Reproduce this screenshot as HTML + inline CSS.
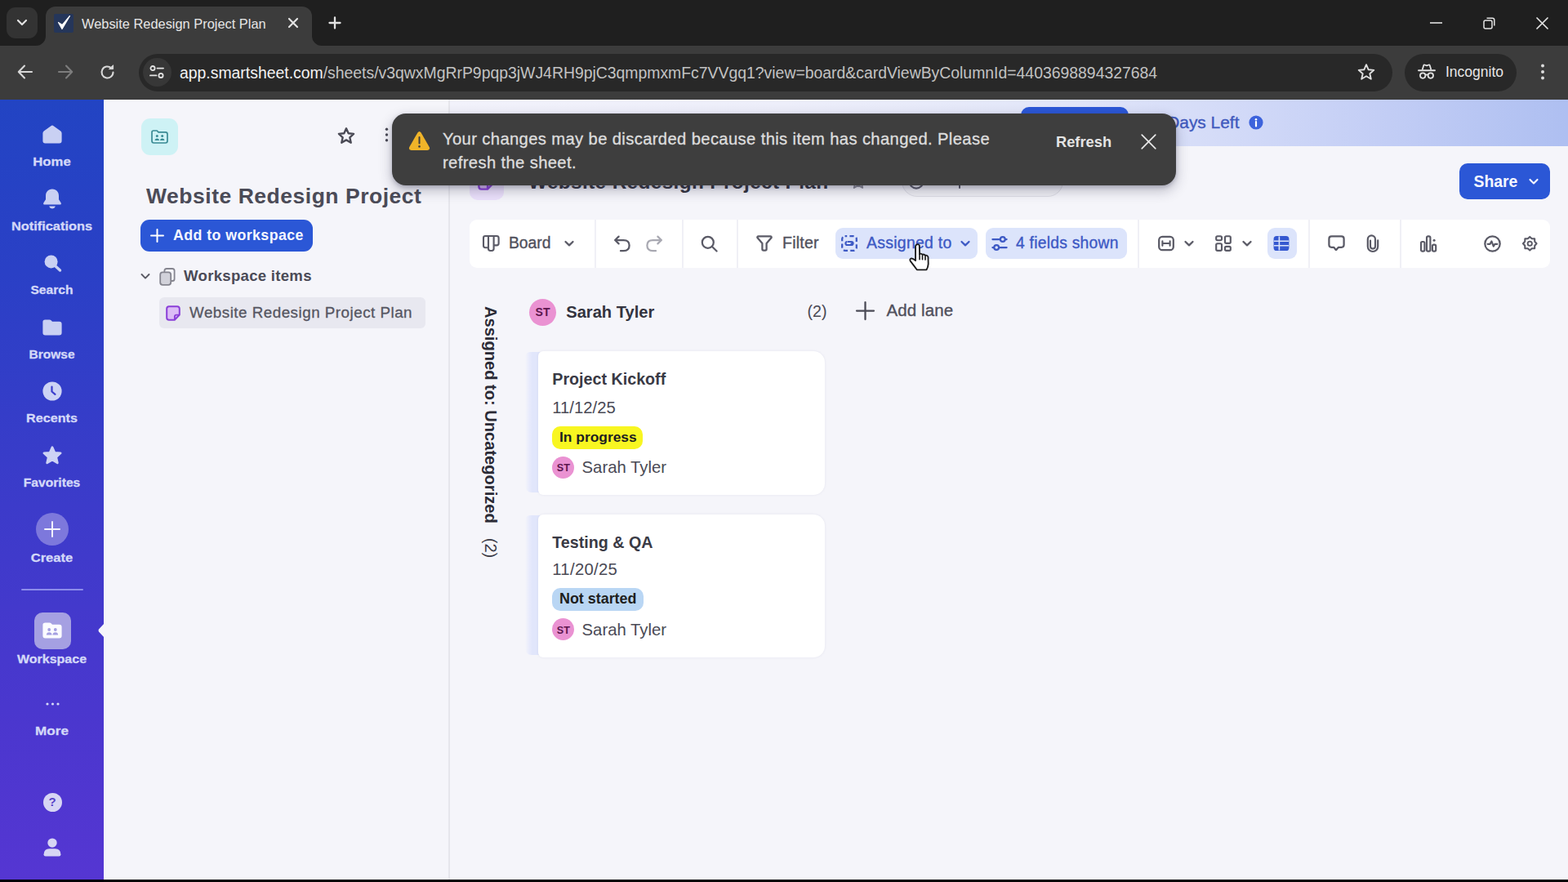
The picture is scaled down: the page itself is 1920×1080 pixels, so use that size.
<!DOCTYPE html>
<html lang="en">
<head>
<meta charset="utf-8">
<title>Website Redesign Project Plan</title>
<style>
*{box-sizing:border-box;margin:0;padding:0}
html,body{width:1920px;height:1080px;overflow:hidden;background:#f5f5fa}
body{font-family:"Liberation Sans",sans-serif;position:relative;color:#3a3a44}
.a{position:absolute}
.t{position:absolute;white-space:nowrap;line-height:1;transform-origin:0 50%}
svg{position:absolute;overflow:visible}
/* browser chrome */
#tabstrip{left:0;top:0;width:1920px;height:56px;background:#1f1f1f}
#toolbar{left:0;top:56px;width:1920px;height:66px;background:#3c3c3c}
#tab{left:56px;top:8px;width:326px;height:48px;background:#3c3c3c;border-radius:12px 12px 0 0}
#tabsearch{left:8px;top:9px;width:38px;height:38px;background:#333333;border-radius:11px}
#urlbar{left:170px;top:65.5px;width:1535px;height:46.5px;background:#282828;border-radius:23px}
#siteinfo{left:175px;top:71px;width:35px;height:35px;background:#373737;border-radius:50%}
#incog{left:1720px;top:65.5px;width:137px;height:46.5px;background:#282828;border-radius:23px}
/* app */
#sidebar{left:0;top:122px;width:127px;height:956px;background:linear-gradient(180deg,#2244c3 0%,#2a40c6 22%,#3c3bca 52%,#4a37ce 78%,#5536d2 100%)}
#leftpanel{left:127px;top:122px;width:423px;height:956px;background:#f5f5fa}
#vline{left:549px;top:122px;width:2px;height:956px;background:#e6e6ec}
#main{left:551px;top:122px;width:1369px;height:956px;background:#f5f5fa}
#banner{left:551px;top:122px;width:1369px;height:56.5px;background:linear-gradient(90deg,#f2f2fb 0%,#edeefa 30%,#e3e7f9 52%,#d5dcf8 68%,#c2cdf5 84%,#aebff1 100%)}
#bottom{left:0;top:1077px;width:1920px;height:3px;background:#000}
.sl{position:absolute;left:0;width:127px;text-align:center;font-weight:bold;font-size:15px;color:#d3d8f8;line-height:1;white-space:nowrap}
</style>
</head>
<body>
<!-- BROWSER CHROME -->
<div class="a" id="tabstrip"></div>
<div class="a" id="toolbar"></div>
<div class="a" id="tabsearch"></div>
<div class="a" id="tab"></div>
<div class="a" id="urlbar"></div>
<div class="a" id="siteinfo"></div>
<div class="a" id="incog"></div>
<!-- APP -->
<div class="a" id="sidebar"></div>
<div class="a" id="leftpanel"></div>
<div class="a" id="main"></div>
<div class="a" id="banner"></div>
<div class="a" id="vline"></div>
<div class="a" id="bottom"></div>
<!-- tab curves -->
<svg class="a" style="left:44px;top:44px" width="12" height="12" viewBox="0 0 12 12"><path d="M12 0 V12 H0 A12 12 0 0 0 12 0Z" fill="#3c3c3c"/></svg>
<svg class="a" style="left:382px;top:44px" width="12" height="12" viewBox="0 0 12 12"><path d="M0 0 V12 H12 A12 12 0 0 1 0 0Z" fill="#3c3c3c"/></svg>
<!-- tab search chevron -->
<svg style="left:20px;top:22px" width="14" height="12" viewBox="0 0 14 12"><path d="M2 3 L7 8 L12 3" fill="none" stroke="#e3e3e3" stroke-width="2.2" stroke-linecap="round" stroke-linejoin="round"/></svg>
<!-- favicon -->
<div class="a" style="left:65.5px;top:16.5px;width:24px;height:23px;background:#25365a;border-radius:2px"></div>
<svg style="left:66px;top:16px" width="24" height="24" viewBox="0 0 24 24"><path d="M5.5 11.5 L10 19.5 L19.5 3.5 L10.2 14.6 Z" fill="#fff" stroke="#fff" stroke-width="1.2" stroke-linejoin="round"/></svg>
<div class="t" id="tabtitle" style="left:100px;top:21px;font-size:16.4px;color:#e6e6e6">Website Redesign Project Plan</div>
<svg style="left:353px;top:22px" width="12" height="12" viewBox="0 0 12 12"><path d="M1 1 L11 11 M11 1 L1 11" stroke="#e3e3e3" stroke-width="2.2" stroke-linecap="round"/></svg>
<svg style="left:403px;top:21px" width="14" height="14" viewBox="0 0 14 14"><path d="M7 0.5 V13.5 M0.5 7 H13.5" stroke="#e3e3e3" stroke-width="2.3" stroke-linecap="round"/></svg>
<!-- window controls -->
<svg style="left:1751px;top:27px" width="15" height="2" viewBox="0 0 15 2"><path d="M0 1 H15" stroke="#e3e3e3" stroke-width="1.6"/></svg>
<svg style="left:1816px;top:21px" width="15" height="15" viewBox="0 0 15 15"><rect x="1" y="4" width="10" height="10" rx="2" fill="none" stroke="#e3e3e3" stroke-width="1.5"/><path d="M4.5 1.2 H11.5 A2.3 2.3 0 0 1 13.8 3.5 V10.5" fill="none" stroke="#e3e3e3" stroke-width="1.5"/></svg>
<svg style="left:1881px;top:21px" width="15" height="15" viewBox="0 0 15 15"><path d="M1 1 L14 14 M14 1 L1 14" stroke="#e3e3e3" stroke-width="1.7" stroke-linecap="round"/></svg>
<!-- nav buttons -->
<svg style="left:21px;top:79px" width="19" height="18" viewBox="0 0 19 18"><path d="M9 1.5 L1.8 9 L9 16.5 M2.2 9 H18" fill="none" stroke="#d8d8d8" stroke-width="2.1" stroke-linecap="round" stroke-linejoin="round"/></svg>
<svg style="left:71px;top:79px" width="19" height="18" viewBox="0 0 19 18"><path d="M10 1.5 L17.2 9 L10 16.5 M16.8 9 H1" fill="none" stroke="#7d7d7d" stroke-width="2.1" stroke-linecap="round" stroke-linejoin="round"/></svg>
<svg style="left:122px;top:79px" width="19" height="19" viewBox="0 0 19 19"><path d="M16.5 9.5 A7 7 0 1 1 14.2 4.3" fill="none" stroke="#d8d8d8" stroke-width="2.1" stroke-linecap="round"/><path d="M11.5 5.6 H16.6 V0.8 Z" fill="#d8d8d8" stroke="#d8d8d8" stroke-width="1" stroke-linejoin="round"/></svg>
<!-- site info icon -->
<svg style="left:183px;top:80px" width="18" height="16" viewBox="0 0 18 16"><circle cx="4" cy="3.6" r="2.6" fill="none" stroke="#e3e3e3" stroke-width="1.8"/><path d="M9.5 3.6 H17" stroke="#e3e3e3" stroke-width="1.9" stroke-linecap="round"/><circle cx="14" cy="12.4" r="2.6" fill="none" stroke="#e3e3e3" stroke-width="1.8"/><path d="M1 12.4 H8.5" stroke="#e3e3e3" stroke-width="1.9" stroke-linecap="round"/></svg>
<div class="t" id="url" style="left:220px;top:79.5px;font-size:19.4px;color:#c2c2c2"><span style="color:#f2f2f2">app.smartsheet.com</span>/sheets/v3qwxMgRrP9pqp3jWJ4RH9pjC3qmpmxmFc7VVgq1?view=board&amp;cardViewByColumnId=4403698894327684</div>
<!-- star -->
<svg style="left:1662px;top:77px" width="22" height="22" viewBox="0 0 22 22"><path d="M11 2.2 L13.7 8.3 L20.3 8.9 L15.3 13.3 L16.8 19.8 L11 16.3 L5.2 19.8 L6.7 13.3 L1.7 8.9 L8.3 8.3 Z" fill="none" stroke="#e0e0e0" stroke-width="1.9" stroke-linejoin="round"/></svg>
<!-- incognito -->
<svg style="left:1736px;top:78px" width="22" height="20" viewBox="0 0 22 20"><path d="M5.6 7.4 L7.2 2.2 Q7.5 1.2 8.6 1.5 L11 2.3 L13.4 1.5 Q14.5 1.2 14.8 2.2 L16.4 7.4" fill="none" stroke="#e3e3e3" stroke-width="1.8" stroke-linejoin="round"/><path d="M1 8.3 H21" stroke="#e3e3e3" stroke-width="1.9" stroke-linecap="round"/><circle cx="6.2" cy="14.6" r="3.2" fill="none" stroke="#e3e3e3" stroke-width="1.8"/><circle cx="15.8" cy="14.6" r="3.2" fill="none" stroke="#e3e3e3" stroke-width="1.8"/><path d="M9.3 14 Q11 12.8 12.7 14" fill="none" stroke="#e3e3e3" stroke-width="1.6"/></svg>
<div class="t" id="incogt" style="left:1770px;top:80px;font-size:17.5px;color:#e6e6e6">Incognito</div>
<!-- menu dots -->
<svg style="left:1886px;top:78px" width="6" height="20" viewBox="0 0 6 20"><circle cx="3" cy="2.5" r="2" fill="#dcdcdc"/><circle cx="3" cy="10" r="2" fill="#dcdcdc"/><circle cx="3" cy="17.5" r="2" fill="#dcdcdc"/></svg>
<!-- SIDEBAR -->
<!-- home -->
<svg style="left:52px;top:153px" width="24" height="23" viewBox="0 0 24 23"><path d="M12 0.6 Q12.8 0.6 13.6 1.2 L22.3 7.6 Q23.6 8.6 23.6 10.2 V19.6 Q23.6 22.6 20.6 22.6 H3.4 Q0.4 22.6 0.4 19.6 V10.2 Q0.4 8.6 1.7 7.6 L10.4 1.2 Q11.2 0.6 12 0.6Z" fill="#c9d0f3"/></svg>
<div class="sl" id="s_home" style="top:189.6px;font-size:15px;transform:scaleX(1.113);-webkit-text-stroke:.3px">Home</div>
<!-- bell -->
<svg style="left:52px;top:231px" width="24" height="25" viewBox="0 0 24 25"><path d="M12 0.5 C6.8 0.5 4 4.2 4 8.8 V13.2 L1.4 17.2 Q0.4 19.4 2.8 19.6 H21.2 Q23.6 19.4 22.6 17.2 L20 13.2 V8.8 C20 4.2 17.2 0.5 12 0.5Z" fill="#c9d0f3"/><path d="M8.2 21.4 H15.8 Q14.8 24.4 12 24.4 Q9.2 24.4 8.2 21.4Z" fill="#c9d0f3"/></svg>
<div class="sl" id="s_not" style="top:268.5px;font-size:15px;transform:scaleX(1.092);-webkit-text-stroke:.3px">Notifications</div>
<!-- search -->
<svg style="left:54px;top:312px" width="22" height="21" viewBox="0 0 22 21"><circle cx="8.6" cy="8.4" r="8" fill="#c9d0f3"/><path d="M13.5 13.5 L19.5 19" stroke="#c9d0f3" stroke-width="3.4" stroke-linecap="round"/></svg>
<div class="sl" id="s_sea" style="top:346.8px;font-size:15px;transform:scaleX(1.04);-webkit-text-stroke:.3px">Search</div>
<!-- browse -->
<svg style="left:52px;top:391px" width="24" height="20" viewBox="0 0 24 20"><path d="M3.2 0.4 H8.6 Q9.8 0.4 10.6 1.3 L12 2.8 H20.6 Q23.6 2.8 23.6 5.8 V16.6 Q23.6 19.6 20.6 19.6 H3.4 Q0.4 19.6 0.4 16.6 V3.2 Q0.4 0.4 3.2 0.4Z" fill="#c9d0f3"/></svg>
<div class="sl" id="s_bro" style="top:425.5px;font-size:15px;transform:scaleX(1.037);-webkit-text-stroke:.3px">Browse</div>
<!-- recents -->
<svg style="left:52px;top:467px" width="24" height="24" viewBox="0 0 24 24"><circle cx="12" cy="12" r="11.6" fill="#cdd3f5"/><path d="M11.5 6.5 V12.5 L15.5 15.8" fill="none" stroke="#3a3ccb" stroke-width="2.2" stroke-linecap="round" stroke-linejoin="round"/></svg>
<div class="sl" id="s_rec" style="top:504.2px;font-size:15px;transform:scaleX(1.077);-webkit-text-stroke:.3px">Recents</div>
<!-- favorites -->
<svg style="left:52px;top:546px" width="24" height="24" viewBox="0 0 24 24"><path d="M12 1.6 L15 8.2 L22.2 8.9 L16.8 13.8 L18.4 20.9 L12 17.2 L5.6 20.9 L7.2 13.8 L1.8 8.9 L9 8.2 Z" fill="#cdd3f5" stroke="#cdd3f5" stroke-width="2.6" stroke-linejoin="round"/></svg>
<div class="sl" id="s_fav" style="top:583.2px;font-size:15px;transform:scaleX(1.045);-webkit-text-stroke:.3px">Favorites</div>
<!-- create -->
<div class="a" style="left:44px;top:628px;width:40px;height:40px;border-radius:50%;background:#7d78dc"></div>
<svg style="left:54px;top:638px" width="20" height="20" viewBox="0 0 20 20"><path d="M10 1 V19 M1 10 H19" stroke="#f4f4ff" stroke-width="2" stroke-linecap="round"/></svg>
<div class="sl" id="s_cre" style="top:675.4px;font-size:15px;transform:scaleX(1.103);-webkit-text-stroke:.3px">Create</div>
<div class="a" style="left:26px;top:721px;width:76px;height:2px;background:#8d8ceb;border-radius:1px"></div>
<!-- workspace -->
<div class="a" style="left:42px;top:750px;width:45px;height:45px;border-radius:10px;background:#a5a0e2"></div>
<svg style="left:52px;top:762px" width="24" height="20" viewBox="0 0 24 20"><path d="M3.2 0.4 H8.6 Q9.8 0.4 10.6 1.3 L12 2.8 H20.6 Q23.6 2.8 23.6 5.8 V16.6 Q23.6 19.6 20.6 19.6 H3.4 Q0.4 19.6 0.4 16.6 V3.2 Q0.4 0.4 3.2 0.4Z" fill="#fbfbff"/><circle cx="8.2" cy="9" r="1.9" fill="#a5a0e2"/><circle cx="15.8" cy="9" r="1.9" fill="#a5a0e2"/><path d="M4.8 15.6 Q5 12.2 8.2 12.2 Q11.4 12.2 11.6 15.6Z M12.4 15.6 Q12.6 12.2 15.8 12.2 Q19 12.2 19.2 15.6Z" fill="#a5a0e2"/></svg>
<div class="sl" id="s_wor" style="top:799.4px;font-size:15px;transform:scaleX(1.068);-webkit-text-stroke:.3px">Workspace</div>
<svg style="left:120px;top:763px" width="8" height="18" viewBox="0 0 8 18"><path d="M8 0 V18 L1 10.4 Q0 9 1 7.6 Z" fill="#f5f5fa"/></svg>
<!-- more -->
<svg style="left:56px;top:860px" width="17" height="4" viewBox="0 0 17 4"><circle cx="2" cy="2" r="1.6" fill="#d5d9f8"/><circle cx="8.5" cy="2" r="1.6" fill="#d5d9f8"/><circle cx="15" cy="2" r="1.6" fill="#d5d9f8"/></svg>
<div class="sl" id="s_mor" style="top:886.5px;font-size:15px;transform:scaleX(1.14);-webkit-text-stroke:.3px">More</div>
<!-- help -->
<div class="a" style="left:52.5px;top:970.5px;width:23px;height:23px;border-radius:50%;background:#d7d5f4"></div>
<div class="t" style="left:52px;top:974px;width:24px;text-align:center;font-size:15px;font-weight:bold;color:#5a45c8">?</div>
<!-- profile -->
<svg style="left:53px;top:1026px" width="22" height="23" viewBox="0 0 24 25"><circle cx="12" cy="6.6" r="6.2" fill="#d7d5f4"/><path d="M0.6 22 Q1 14.4 8 14.4 H16 Q23 14.4 23.4 22 Q23.4 24.4 21 24.4 H3 Q0.6 24.4 0.6 22Z" fill="#d7d5f4"/></svg>
<!-- LEFT PANEL -->
<div class="a" style="left:173px;top:145px;width:45px;height:45px;border-radius:11px;background:#cef2f5"></div>
<svg style="left:185px;top:159px" width="21" height="17" viewBox="0 0 21 17"><path d="M3 1 H7.2 L9 2.8 H17.6 Q20 2.8 20 5.2 V13.6 Q20 16 17.6 16 H3.4 Q1 16 1 13.6 V3 Q1 1 3 1Z" fill="none" stroke="#3a8b94" stroke-width="1.7" stroke-linejoin="round"/><circle cx="7.3" cy="7.6" r="1.5" fill="#3a8b94"/><circle cx="13.7" cy="7.6" r="1.5" fill="#3a8b94"/><path d="M4.6 13 Q4.8 10.4 7.3 10.4 Q9.8 10.4 10 13Z M11 13 Q11.2 10.4 13.7 10.4 Q16.2 10.4 16.4 13Z" fill="#3a8b94"/></svg>
<!-- star -->
<svg style="left:412.5px;top:155px" width="22" height="22" viewBox="0 0 23 23"><path d="M11.5 2.4 L14.3 8.6 L21 9.3 L16 13.9 L17.5 20.6 L11.5 17.1 L5.5 20.6 L7 13.9 L2 9.3 L8.7 8.6 Z" fill="none" stroke="#4a4a55" stroke-width="2.5" stroke-linejoin="round"/></svg>
<!-- kebab -->
<svg style="left:471px;top:156px" width="5" height="18" viewBox="0 0 5 18"><circle cx="2.5" cy="2.2" r="1.7" fill="#4a4a55"/><circle cx="2.5" cy="9" r="1.7" fill="#4a4a55"/><circle cx="2.5" cy="15.8" r="1.7" fill="#4a4a55"/></svg>
<div class="t" id="wtitle" style="left:179px;top:226.5px;font-size:26.5px;letter-spacing:.52px;font-weight:bold;color:#4b4b57">Website Redesign Project</div>
<!-- add button -->
<div class="a" style="left:172px;top:269px;width:211px;height:39px;border-radius:11px;background:#2b57d6"></div>
<svg style="left:184px;top:280px" width="17" height="17" viewBox="0 0 17 17"><path d="M8.5 1 V16 M1 8.5 H16" stroke="#fff" stroke-width="2" stroke-linecap="round"/></svg>
<div class="t" id="addws" style="left:212px;top:280px;font-size:17.8px;letter-spacing:.42px;font-weight:bold;color:#f4f6ff">Add to workspace</div>
<!-- workspace items -->
<svg style="left:172px;top:334px" width="12" height="9" viewBox="0 0 12 9"><path d="M1.5 2 L6 6.6 L10.5 2" fill="none" stroke="#5a5a64" stroke-width="1.9" stroke-linecap="round" stroke-linejoin="round"/></svg>
<svg style="left:195px;top:328px" width="20" height="22" viewBox="0 0 20 22"><path d="M6.4 4.6 V3.6 Q6.4 1 9 1 H16 Q18.6 1 18.6 3.6 V13.4 Q18.6 16 16 16 H15" fill="none" stroke="#85858f" stroke-width="1.8" stroke-linecap="round"/><rect x="1.2" y="5.4" width="13" height="15.4" rx="3" fill="#d2d2da" stroke="#85858f" stroke-width="1.8"/></svg>
<div class="t" id="wsitems" style="left:225px;top:329px;font-size:18.6px;letter-spacing:.28px;font-weight:bold;color:#4b4b57">Workspace items</div>
<!-- selected row -->
<div class="a" style="left:195px;top:364px;width:326px;height:38px;border-radius:6px;background:#e8e8f0"></div>
<svg style="left:203px;top:374px" width="18" height="19" viewBox="0 0 18 19"><path d="M4 1.2 H14 Q16.8 1.2 16.8 4 V11.5 L10.8 17.8 H4 Q1.2 17.8 1.2 15 V4 Q1.2 1.2 4 1.2Z" fill="#dcbcf6" stroke="#8a3fd8" stroke-width="2" stroke-linejoin="round"/><path d="M16.6 11.6 H13 Q10.9 11.6 10.9 13.7 V17.4" fill="none" stroke="#8a3fd8" stroke-width="1.9" stroke-linejoin="round"/></svg>
<div class="t" id="wsrow" style="left:232px;top:374px;font-size:18.8px;letter-spacing:.5px;color:#565662;-webkit-text-stroke:.3px">Website Redesign Project Plan</div>
<!-- MAIN -->
<div class="a" style="left:1250px;top:131px;width:132px;height:40px;border-radius:10px;background:#2b57d6"></div>
<div class="t" id="days" style="left:1429.2px;top:139.6px;font-size:20.9px;color:#3f59bd;-webkit-text-stroke:.35px;">Days Left</div>
<svg style="left:1529px;top:141px" width="18" height="18" viewBox="0 0 18 18"><circle cx="9" cy="9" r="8.6" fill="#3d63dc"/><circle cx="9" cy="5.2" r="1.3" fill="#fff"/><path d="M9 8 V13.4" stroke="#fff" stroke-width="2.2" stroke-linecap="round"/></svg>
<div class="a" style="left:575px;top:203px;width:42px;height:42px;border-radius:10px;background:#ebe0fb"></div>
<svg style="left:585px;top:211.5px" width="20" height="21" viewBox="0 0 18 19"><path d="M4 1.2 H14 Q16.8 1.2 16.8 4 V11.5 L10.8 17.8 H4 Q1.2 17.8 1.2 15 V4 Q1.2 1.2 4 1.2Z" fill="#dcbcf6" stroke="#8a3fd8" stroke-width="2.15" stroke-linejoin="round"/><path d="M16.6 11.6 H13 Q10.9 11.6 10.9 13.7 V17.4" fill="none" stroke="#8a3fd8" stroke-width="2.25" stroke-linejoin="round"/></svg>
<div class="t" id="stitle" style="left:647px;top:210.5px;font-size:24.4px;color:#33333d;font-weight:bold;letter-spacing:0.35px;">Website Redesign Project Plan</div>
<svg style="left:1041px;top:212px" width="20" height="20" viewBox="0 0 23 23"><path d="M11.5 2.4 L14.3 8.6 L21 9.3 L16 13.9 L17.5 20.6 L11.5 17.1 L5.5 20.6 L7 13.9 L2 9.3 L8.7 8.6 Z" fill="none" stroke="#8a8a94" stroke-width="2.15" stroke-linejoin="round"/></svg>
<div class="a" style="left:1104px;top:203px;width:198px;height:38px;border-radius:19px;background:#efeff4;border:1.5px solid #dcdce4"></div>
<svg style="left:1112px;top:212px" width="20" height="20" viewBox="0 0 20 20"><circle cx="10" cy="10" r="8.6" fill="none" stroke="#5a5a66" stroke-width="2.15"/></svg>
<div class="a" style="left:1173.5px;top:224px;width:2px;height:7px;background:#5a5a66;border-radius:1px"></div>
<div class="a" style="left:1787px;top:200px;width:111px;height:44px;border-radius:10px;background:#2b57d6"></div>
<div class="t" id="share" style="left:1804.5px;top:212.6px;font-size:19.4px;color:#f4f6ff;font-weight:bold;">Share</div>
<svg style="left:1872px;top:218px" width="12" height="9" viewBox="0 0 12 9"><path d="M1.5 2 L6 6.4 L10.5 2" fill="none" stroke="#f4f6ff" stroke-width="2.15" stroke-linecap="round" stroke-linejoin="round"/></svg>
<div class="a" id="tcard" style="left:575px;top:269px;width:1323px;height:59px;border-radius:9px;background:#fff"></div>
<div class="a" style="left:727.7px;top:269px;width:2px;height:59px;background:#f0f0f6"></div>
<div class="a" style="left:834.7px;top:269px;width:2px;height:59px;background:#f0f0f6"></div>
<div class="a" style="left:902px;top:269px;width:2px;height:59px;background:#f0f0f6"></div>
<div class="a" style="left:1392.7px;top:269px;width:2px;height:59px;background:#f0f0f6"></div>
<div class="a" style="left:1601.5px;top:269px;width:2px;height:59px;background:#f0f0f6"></div>
<div class="a" style="left:1714px;top:269px;width:2px;height:59px;background:#f0f0f6"></div>
<svg style="left:591px;top:288px" width="21" height="20" viewBox="0 0 21 20"><path d="M3.2 1 H17.2 Q19.6 1 19.6 3.4 V10 Q19.6 12.4 17.2 12.4 H13.6 M1 3.2 Q1 1 3.2 1 M1 3.2 V12.8 Q1 15.2 3.4 15.2 H7 M7 1.4 V16.6 Q7 19 9.4 19 H11.2 Q13.6 19 13.6 16.6 V1.4" fill="none" stroke="#5a5a66" stroke-width="2.15" stroke-linejoin="round"/></svg>
<div class="t" id="board" style="left:623px;top:288.2px;font-size:19.3px;color:#50505c;-webkit-text-stroke:.35px;">Board</div>
<svg style="left:691px;top:293.5px" width="12" height="9" viewBox="0 0 12 9"><path d="M1.5 2 L6 6.4 L10.5 2" fill="none" stroke="#5a5a66" stroke-width="2.25" stroke-linecap="round" stroke-linejoin="round"/></svg>
<svg style="left:751px;top:288px" width="22" height="21" viewBox="0 0 22 21"><path d="M6.6 1.6 L2.2 6 L6.6 10.4" fill="none" stroke="#5a5a66" stroke-width="2.25" stroke-linecap="round" stroke-linejoin="round"/><path d="M2.6 6 H12.6 Q19.6 6 19.6 12.6 Q19.6 19.2 12.6 19.2 H9" fill="none" stroke="#5a5a66" stroke-width="2.25" stroke-linecap="round"/></svg>
<svg style="left:790px;top:288px" width="22" height="21" viewBox="0 0 22 21"><path d="M15.4 1.6 L19.8 6 L15.4 10.4" fill="none" stroke="#a9a9b2" stroke-width="2.25" stroke-linecap="round" stroke-linejoin="round"/><path d="M19.4 6 H9.4 Q2.4 6 2.4 12.6 Q2.4 19.2 9.4 19.2 H13" fill="none" stroke="#a9a9b2" stroke-width="2.25" stroke-linecap="round"/></svg>
<svg style="left:858px;top:288px" width="21" height="21" viewBox="0 0 21 21"><circle cx="8.8" cy="8.8" r="7" fill="none" stroke="#5a5a66" stroke-width="2.25"/><path d="M14 14 L19.6 19.6" stroke="#5a5a66" stroke-width="2.15" stroke-linecap="round"/></svg>
<svg style="left:926px;top:288px" width="20" height="20" viewBox="0 0 20 20"><path d="M2.6 1.4 H17.4 Q19 1.4 18.6 3 L12.6 10 V17 Q12.6 18.6 11 18.6 H9 Q7.4 18.6 7.4 17 V10 L1.4 3 Q1 1.4 2.6 1.4Z" fill="none" stroke="#5a5a66" stroke-width="2.25" stroke-linejoin="round"/></svg>
<div class="t" id="filter" style="left:958px;top:287.9px;font-size:19.6px;color:#50505c;letter-spacing:0.2px;-webkit-text-stroke:.35px;">Filter</div>
<div class="a" style="left:1023px;top:279px;width:174px;height:37.5px;border-radius:9px;background:#dce4fb"></div>
<svg style="left:1030px;top:288px" width="20" height="20" viewBox="0 0 20 20"><rect x="1.2" y="1.2" width="17.6" height="17.6" rx="3.4" fill="none" stroke="#3d59c4" stroke-width="2.25" stroke-dasharray="5.2 3.2" stroke-dashoffset="2.6"/><path d="M8.6 8 H12.4 Q14.6 8 14.6 10 Q14.6 12 12.4 12 H7.6 Q5.4 12 5.4 10 Q5.4 8.6 6.4 8.2 M11.4 12 Q12.6 12.2 12.6 10" fill="none" stroke="#3d59c4" stroke-width="2.15" stroke-linecap="round"/></svg>
<div class="t" id="assigned" style="left:1061px;top:288.1px;font-size:19.4px;color:#3d59c4;letter-spacing:0.3px;-webkit-text-stroke:.35px;">Assigned to</div>
<svg style="left:1176px;top:293.5px" width="12" height="9" viewBox="0 0 12 9"><path d="M1.5 2 L6 6.4 L10.5 2" fill="none" stroke="#3d59c4" stroke-width="2.25" stroke-linecap="round" stroke-linejoin="round"/></svg>
<div class="a" style="left:1206.5px;top:279px;width:173px;height:37.5px;border-radius:9px;background:#dce4fb"></div>
<svg style="left:1214px;top:288px" width="20" height="20" viewBox="0 0 20 20"><path d="M1.4 5 H10.6 M17 5 H18.6 M1.4 15 H3 M9.4 15 H18.6" stroke="#3d59c4" stroke-width="2.25" stroke-linecap="round"/><circle cx="13.8" cy="5" r="2.9" fill="none" stroke="#3d59c4" stroke-width="2.15"/><circle cx="6.2" cy="15" r="2.9" fill="none" stroke="#3d59c4" stroke-width="2.15"/></svg>
<div class="t" id="fields" style="left:1244px;top:288.2px;font-size:19.3px;color:#3d59c4;letter-spacing:0.25px;-webkit-text-stroke:.35px;">4 fields shown</div>
<svg style="left:1418px;top:288px" width="20" height="20" viewBox="0 0 20 20"><rect x="1.2" y="1.8" width="17.6" height="16.4" rx="4" fill="none" stroke="#5a5a66" stroke-width="2.25"/><path d="M5.4 7.2 V12.8 M14.6 7.2 V12.8 M5.4 10 H14.6" fill="none" stroke="#5a5a66" stroke-width="2.15" stroke-linecap="round"/></svg>
<svg style="left:1450px;top:293.5px" width="12" height="9" viewBox="0 0 12 9"><path d="M1.5 2 L6 6.4 L10.5 2" fill="none" stroke="#5a5a66" stroke-width="2.25" stroke-linecap="round" stroke-linejoin="round"/></svg>
<svg style="left:1488px;top:288px" width="20" height="20" viewBox="0 0 20 20"><rect x="1.2" y="1.2" width="6.8" height="5" rx="1.6" fill="none" stroke="#5a5a66" stroke-width="2.15"/><rect x="12" y="1.2" width="6.8" height="8.6" rx="1.6" fill="none" stroke="#5a5a66" stroke-width="2.15"/><rect x="1.2" y="10.2" width="6.8" height="8.6" rx="1.6" fill="none" stroke="#5a5a66" stroke-width="2.15"/><rect x="12" y="13.8" width="6.8" height="5" rx="1.6" fill="none" stroke="#5a5a66" stroke-width="2.15"/></svg>
<svg style="left:1520.5px;top:293.5px" width="12" height="9" viewBox="0 0 12 9"><path d="M1.5 2 L6 6.4 L10.5 2" fill="none" stroke="#5a5a66" stroke-width="2.25" stroke-linecap="round" stroke-linejoin="round"/></svg>
<div class="a" style="left:1551.5px;top:279px;width:36px;height:37.5px;border-radius:9px;background:#dce4fb"></div>
<svg style="left:1559px;top:288px" width="20" height="20" viewBox="0 0 20 20"><rect x="0.6" y="1" width="18.8" height="18" rx="3.6" fill="#3558d0"/><path d="M7.4 1.6 V18.4 M1 7.2 H19 M1 12.8 H19" stroke="#dbe4fb" stroke-width="1.6"/></svg>
<svg style="left:1626px;top:288px" width="21" height="20" viewBox="0 0 21 20"><path d="M4.4 1.4 H16.6 Q19.6 1.4 19.6 4.4 V11.8 Q19.6 14.8 16.6 14.8 H13 L10.6 17.6 Q10 18.2 9.4 17.6 L7.4 14.8 H4.4 Q1.4 14.8 1.4 11.8 V4.4 Q1.4 1.4 4.4 1.4Z" fill="none" stroke="#5a5a66" stroke-width="2.25" stroke-linejoin="round"/></svg>
<svg style="left:1673px;top:287px" width="16" height="22" viewBox="0 0 16 22"><path d="M14.2 7.4 V14.8 A6.2 6.2 0 0 1 1.8 14.8 V6 A4.6 4.6 0 0 1 11 6 V14.6 A3 3 0 0 1 5 14.6 V7.6" fill="none" stroke="#5a5a66" stroke-width="2.2" stroke-linecap="round"/></svg>
<svg style="left:1739px;top:288px" width="20" height="21" viewBox="0 0 20 21"><rect x="1" y="8" width="4.4" height="11.6" rx="1.6" fill="none" stroke="#5a5a66" stroke-width="2.15"/><rect x="8" y="1.4" width="4.4" height="18.2" rx="1.6" fill="none" stroke="#5a5a66" stroke-width="2.15"/><rect x="15" y="11.6" width="4.2" height="8" rx="1.6" fill="none" stroke="#5a5a66" stroke-width="2.15"/><circle cx="17.1" cy="6.2" r="1.5" fill="#5a5a66"/></svg>
<svg style="left:1817px;top:288px" width="21" height="21" viewBox="0 0 21 21"><circle cx="10.5" cy="10.5" r="9.2" fill="none" stroke="#5a5a66" stroke-width="2.25"/><path d="M4.6 10.8 H7.6 L9.4 7.4 L11.8 13.6 L13.4 10.8 H16.4" fill="none" stroke="#5a5a66" stroke-width="2.15" stroke-linecap="round" stroke-linejoin="round"/></svg>
<svg style="left:1863.5px;top:289px" width="18.5" height="18.5" viewBox="0 0 21 21"><path d="M10.50 1.10 L13.33 3.66 L17.15 3.85 L17.34 7.67 L19.90 10.50 L17.34 13.33 L17.15 17.15 L13.33 17.34 L10.50 19.90 L7.67 17.34 L3.85 17.15 L3.66 13.33 L1.10 10.50 L3.66 7.67 L3.85 3.85 L7.67 3.66Z" fill="none" stroke="#5a5a66" stroke-width="2.4" stroke-linejoin="round"/><circle cx="10.5" cy="10.5" r="3" fill="none" stroke="#5a5a66" stroke-width="2.15"/></svg>
<div class="t" id="vtext" style="left:601.3px;top:375px;font-size:20.1px;font-weight:bold;color:#2b2b36;transform:rotate(90deg);transform-origin:0 0;margin-top:0;line-height:1"><span style="position:relative;top:-10px">Assigned to: Uncategorized<span style="font-weight:normal;color:#3c3c47;margin-left:18px">(2)</span></span></div>
<div class="a" style="left:648px;top:365.5px;width:33px;height:33px;border-radius:50%;background:#ea92d2"></div>
<div class="t" id="av0" style="left:648px;top:374.7px;font-size:14px;color:#5c164e;font-weight:bold;width:33px;text-align:center;">ST</div>
<div class="t" id="lane" style="left:693.3px;top:372.0px;font-size:20.1px;color:#33333e;font-weight:bold;">Sarah Tyler</div>
<div class="t" id="cnt" style="left:988.5px;top:371.7px;font-size:19.6px;color:#4a4a55;">(2)</div>
<svg style="left:1048px;top:369px" width="23" height="23" viewBox="0 0 23 23"><path d="M11.5 1 V22 M1 11.5 H22" stroke="#4a4a55" stroke-width="2.25" stroke-linecap="round"/></svg>
<div class="t" id="addlane" style="left:1085.5px;top:369.9px;font-size:20.5px;color:#50505c;letter-spacing:0.1px;-webkit-text-stroke:.35px;">Add lane</div>
<div class="a" style="left:643px;top:431.0px;width:30px;height:171.5px;border-radius:6px 0 0 8px;background:linear-gradient(90deg,rgba(226,231,251,0) 0,#e8ebfc 5px,#e1e6fb 9px,#e1e6fb 100%)"></div>
<div class="a" style="left:658.5px;top:429.5px;width:351.5px;height:176px;border-radius:6px 14px 14px 6px;background:#fff;box-shadow:0 0 3px rgba(120,120,160,.14)"></div>
<div class="t" id="ct1" style="left:676.3px;top:454.8px;font-size:19.7px;color:#3a3a45;font-weight:bold;">Project Kickoff</div>
<div class="t" id="cd1" style="left:676.3px;top:488.9px;font-size:20.3px;color:#4a4a55;">11/12/25</div>
<div class="a" style="left:675.5px;top:521.9px;width:111.5px;height:28px;border-radius:10px;background:#f8f621"></div>
<div class="t" id="cb1" style="left:685px;top:526.7px;font-size:17.4px;color:#1e1e20;font-weight:bold;">In progress</div>
<div class="a" style="left:676.3px;top:558.6px;width:27px;height:27px;border-radius:50%;background:#ea92d2"></div>
<div class="t" id="ca1" style="left:676.3px;top:567.0px;font-size:12.6px;color:#5c164e;font-weight:bold;width:27px;text-align:center;">ST</div>
<div class="t" id="cn1" style="left:712.6px;top:562.3px;font-size:20.3px;color:#4a4a55;">Sarah Tyler</div>
<div class="a" style="left:643px;top:631.0px;width:30px;height:170.5px;border-radius:6px 0 0 8px;background:linear-gradient(90deg,rgba(226,231,251,0) 0,#e8ebfc 5px,#e1e6fb 9px,#e1e6fb 100%)"></div>
<div class="a" style="left:658.5px;top:629.5px;width:351.5px;height:175px;border-radius:6px 14px 14px 6px;background:#fff;box-shadow:0 0 3px rgba(120,120,160,.14)"></div>
<div class="t" id="ct2" style="left:676.3px;top:654.8px;font-size:19.7px;color:#3a3a45;font-weight:bold;">Testing &amp; QA</div>
<div class="t" id="cd2" style="left:676.3px;top:687.3px;font-size:20.3px;color:#4a4a55;letter-spacing:0.3px;">11/20/25</div>
<div class="a" style="left:675.5px;top:719.9px;width:112.6px;height:28px;border-radius:10px;background:#b9d6f4"></div>
<div class="t" id="cb2" style="left:685px;top:725.2px;font-size:17.9px;color:#1e1e20;font-weight:bold;">Not started</div>
<div class="a" style="left:676.3px;top:757.2px;width:27px;height:27px;border-radius:50%;background:#ea92d2"></div>
<div class="t" id="ca2" style="left:676.3px;top:765.6px;font-size:12.6px;color:#5c164e;font-weight:bold;width:27px;text-align:center;">ST</div>
<div class="t" id="cn2" style="left:712.6px;top:760.9px;font-size:20.3px;color:#4a4a55;">Sarah Tyler</div>
<!-- TOAST -->
<div class="a" id="toast" style="left:480px;top:139px;width:960px;height:88px;border-radius:17px;background:#3e3e3e;box-shadow:0 6px 16px rgba(40,40,70,.3),0 2px 5px rgba(40,40,70,.22)"></div>
<svg style="left:500px;top:160px" width="27" height="25" viewBox="0 0 27 25"><path d="M11.4 2.4 Q13.5 -0.6 15.6 2.4 L25.8 20.2 Q27 23.8 23.4 24 H3.6 Q0 23.8 1.2 20.2 Z" fill="#f0b429"/><path d="M13.5 8 V15.4" stroke="#3e3e3e" stroke-width="2" stroke-linecap="round"/><circle cx="13.5" cy="19.4" r="1.3" fill="#3e3e3e"/></svg>
<div class="t" id="toast1" style="left:542px;top:160px;font-size:20.2px;letter-spacing:.38px;color:#dcdcdc;-webkit-text-stroke:.35px">Your changes may be discarded because this item has changed. Please</div>
<div class="t" id="toast2" style="left:542px;top:188.5px;font-size:20.2px;letter-spacing:.38px;color:#dcdcdc;-webkit-text-stroke:.35px">refresh the sheet.</div>
<div class="t" id="refresh" style="left:1293px;top:164.5px;font-size:18.3px;font-weight:bold;color:#e4e4e4">Refresh</div>
<svg style="left:1397px;top:164px" width="19" height="19" viewBox="0 0 19 19"><path d="M1.2 1.2 L17.8 17.8 M17.8 1.2 L1.2 17.8" stroke="#e8e8e8" stroke-width="1.7" stroke-linecap="round"/></svg>
<!-- CURSOR -->
<svg style="left:1111px;top:296.5px" width="30.5" height="37" viewBox="0 0 28 34"><path d="M10.4 2.4 Q12.4 1.2 13.6 3.2 L13.8 13 Q15.6 11.8 17 13.6 Q18.8 12.6 20.2 14.6 Q22.6 13.8 23.4 16.4 L23.6 24 Q23.4 27.6 21.6 30.6 H10.8 Q7.4 26 3.4 20.8 Q2.2 18.4 4.6 17.8 Q6.6 17.8 9.2 20.4 L9.2 4.4 Q9.2 3 10.4 2.4Z" fill="#fff" stroke="#1a1a1a" stroke-width="1.7" stroke-linejoin="round"/><path d="M13.8 13 V19 M17 14 V19 M20.2 15.4 V19.4" stroke="#1a1a1a" stroke-width="1.5" stroke-linecap="round"/></svg>
</body>
</html>
